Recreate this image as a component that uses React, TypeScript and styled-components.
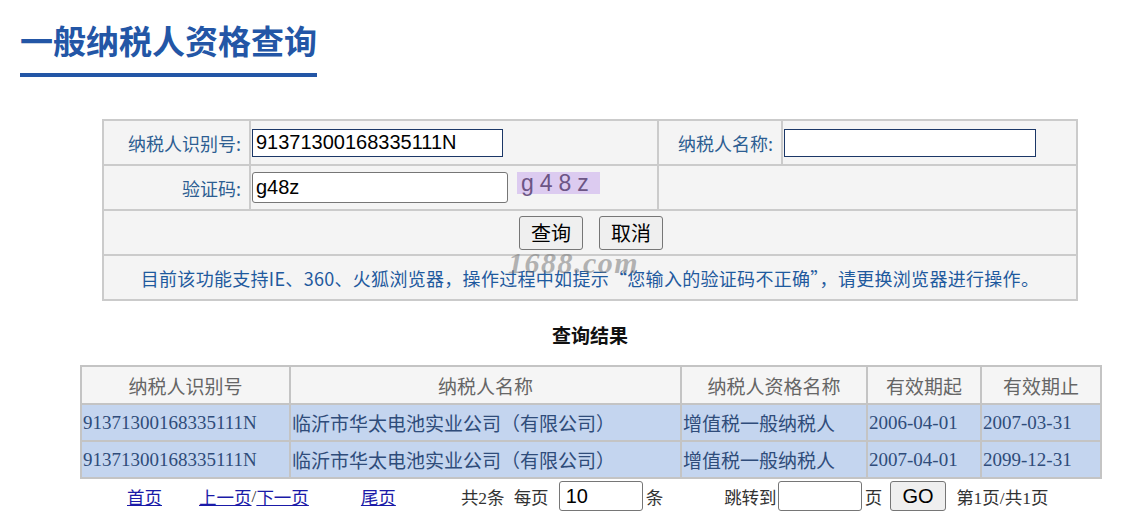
import React from 'react';
import styled, { createGlobalStyle } from 'styled-components';

const GlobalStyle = createGlobalStyle`
  html, body {
    margin: 0;
    padding: 0;
    background: #fff;
  }
  body {
    font-family: "Liberation Sans", "Noto Sans CJK SC", sans-serif;
  }
`;

const Page = styled.div`
  width: 1147px;
  padding-bottom: 10px;
`;

const Header = styled.div`
  padding: 16px 0 0 20px;
`;

const Title = styled.h1`
  display: inline-block;
  margin: 0;
  padding-bottom: 9px;
  font-family: "Noto Sans CJK SC", sans-serif;
  font-size: 33px;
  line-height: 48px;
  font-weight: 700;
  color: #2356a6;
  border-bottom: 4px solid #2356a6;
`;

const FormTable = styled.table`
  margin: 42px 0 0 102px;
  width: 974px;
  table-layout: fixed;
  border-collapse: collapse;
  border: 2px solid #cbcbcb;
`;

const Cell = styled.td<{ $align?: string }>`
  height: 43px;
  padding: 0;
  border: 2px solid #cbcbcb;
  background: #f4f4f4;
  text-align: ${(p) => p.$align || 'left'};
  vertical-align: middle;
`;

const Label = styled(Cell)`
  padding-right: 8px;
  text-align: right;
  font-family: "Noto Sans CJK SC", sans-serif;
  font-size: 18px;
  color: #2d5e92;
`;

const FieldRow = styled.div`
  display: flex;
  align-items: center;
  padding-left: 1px;
`;

const TextField = styled.input<{ $w: number; $rounded?: boolean }>`
  box-sizing: border-box;
  width: ${(p) => p.$w}px;
  height: ${(p) => (p.$rounded ? 31 : 28)}px;
  margin: 0;
  padding: 0 3px;
  border: 1px solid ${(p) => (p.$rounded ? '#767676' : '#1b3767')};
  border-radius: ${(p) => (p.$rounded ? 3 : 0)}px;
  background: #fff;
  font-family: "Liberation Sans", sans-serif;
  font-size: 20px;
  color: #000;
  outline: none;
`;

const Captcha = styled.span`
  display: inline-block;
  margin: -10px 0 0 9px;
  width: 83px;
  height: 22px;
  line-height: 22px;
  padding-left: 4px;
  box-sizing: border-box;
  background: #dccbf0;
  font-family: "Liberation Sans", sans-serif;
  font-size: 23px;
  letter-spacing: 6px;
  color: #6c5585;
`;

const Buttons = styled.div`
  display: flex;
  justify-content: center;
  gap: 16px;
  padding-left: 2px;
`;

const Button = styled.button<{ $w: number; $h: number }>`
  box-sizing: border-box;
  width: ${(p) => p.$w}px;
  height: ${(p) => p.$h}px;
  padding: 0;
  border: 1px solid #767676;
  border-radius: 3px;
  background: #efefef;
  font-family: "Liberation Sans", "Noto Sans CJK SC", sans-serif;
  font-size: 20px;
  color: #000;
`;

const Notice = styled.div`
  position: relative;
  font-family: "Noto Sans CJK SC", sans-serif;
  font-size: 18px;
  letter-spacing: 0.3px;
  color: #1f5a9e;
  text-align: center;
`;

const Watermark = styled.span`
  position: absolute;
  left: 404px;
  top: -19px;
  font-family: "Liberation Serif", serif;
  font-style: italic;
  font-weight: 700;
  font-size: 30px;
  letter-spacing: 1.5px;
  color: rgba(110, 110, 110, 0.5);
  pointer-events: none;
`;

const Results = styled.div`
  margin: 0 0 0 80px;
  width: 1020px;
`;

const ResultTitle = styled.div`
  margin: 23px 0 15px;
  text-align: center;
  font-family: "Liberation Serif", "Noto Sans CJK SC", serif;
  font-weight: 700;
  font-size: 19px;
  line-height: 26px;
  color: #111;
`;

const ResultTable = styled.table`
  width: 1020px;
  table-layout: fixed;
  border-collapse: collapse;
  border: 2px solid #c4c4c4;
`;

const Th = styled.th`
  height: 36px;
  padding: 0;
  border: 2px solid #c4c4c4;
  background: #f5f5f5;
  font-family: "Liberation Serif", "Noto Sans CJK SC", serif;
  font-weight: 400;
  font-size: 19px;
  color: #666;
  text-align: center;
`;

const Td = styled.td`
  height: 35px;
  padding: 0 0 0 1px;
  border: 2px solid #c4c4c4;
  background: #c4d5ef;
  font-family: "Liberation Serif", "Noto Sans CJK SC", serif;
  font-size: 19px;
  color: #2f4c7a;
  white-space: nowrap;
  overflow: hidden;
`;

const Pager = styled.div`
  display: flex;
  align-items: center;
  height: 30px;
  margin: 2px 0 0 127px;
  font-family: "Liberation Serif", "Noto Sans CJK SC", serif;
  font-size: 17.5px;
  color: #333;
`;

const PagerItem = styled.span<{ $ml?: number }>`
  margin-left: ${(p) => p.$ml || 0}px;
  white-space: nowrap;
`;

const PagerLink = styled.a<{ $ml?: number }>`
  margin-left: ${(p) => p.$ml || 0}px;
  color: #1a1aa8;
  text-decoration: underline;
  cursor: pointer;
  white-space: nowrap;
`;

const PagerInput = styled.input<{ $ml?: number }>`
  box-sizing: border-box;
  width: 84px;
  height: 30px;
  margin: 0 0 0 ${(p) => p.$ml || 0}px;
  padding: 0 6px;
  border: 1px solid #767676;
  border-radius: 3px;
  background: #fff;
  font-family: "Liberation Sans", sans-serif;
  font-size: 20px;
  color: #000;
  outline: none;
`;

const GoButton = styled(Button)`
  margin-left: 8px;
`;

const rows = [
  ['91371300168335111N', '临沂市华太电池实业公司（有限公司）', '增值税一般纳税人', '2006-04-01', '2007-03-31'],
  ['91371300168335111N', '临沂市华太电池实业公司（有限公司）', '增值税一般纳税人', '2007-04-01', '2099-12-31'],
];

const App: React.FC = () => {
  return (
    <Page>
      <GlobalStyle />
      <Header>
        <Title>一般纳税人资格查询</Title>
      </Header>

      <FormTable>
        <colgroup>
          <col style={{ width: 147 }} />
          <col style={{ width: 408 }} />
          <col style={{ width: 124 }} />
          <col style={{ width: 295 }} />
        </colgroup>
        <tbody>
          <tr>
            <Label>纳税人识别号:</Label>
            <Cell>
              <FieldRow>
                <TextField $w={251} defaultValue="91371300168335111N" />
              </FieldRow>
            </Cell>
            <Label>纳税人名称:</Label>
            <Cell>
              <FieldRow>
                <TextField $w={252} defaultValue="" />
              </FieldRow>
            </Cell>
          </tr>
          <tr>
            <Label>验证码:</Label>
            <Cell>
              <FieldRow>
                <TextField $w={256} $rounded defaultValue="g48z" />
                <Captcha>g48z</Captcha>
              </FieldRow>
            </Cell>
            <Cell colSpan={2} />
          </tr>
          <tr>
            <Cell colSpan={4}>
              <Buttons>
                <Button $w={64} $h={34}>查询</Button>
                <Button $w={64} $h={34}>取消</Button>
              </Buttons>
            </Cell>
          </tr>
          <tr>
            <Cell colSpan={4}>
              <Notice>
                目前该功能支持IE、360、火狐浏览器，操作过程中如提示“您输入的验证码不正确”，请更换浏览器进行操作。
                <Watermark>1688.com</Watermark>
              </Notice>
            </Cell>
          </tr>
        </tbody>
      </FormTable>

      <Results>
        <ResultTitle>查询结果</ResultTitle>
        <ResultTable>
          <colgroup>
            <col style={{ width: 209 }} />
            <col style={{ width: 391 }} />
            <col style={{ width: 186 }} />
            <col style={{ width: 114 }} />
            <col style={{ width: 120 }} />
          </colgroup>
          <thead>
            <tr>
              <Th>纳税人识别号</Th>
              <Th>纳税人名称</Th>
              <Th>纳税人资格名称</Th>
              <Th>有效期起</Th>
              <Th>有效期止</Th>
            </tr>
          </thead>
          <tbody>
            {rows.map((r, i) => (
              <tr key={i}>
                {r.map((c, j) => (
                  <Td key={j}>{c}</Td>
                ))}
              </tr>
            ))}
          </tbody>
        </ResultTable>
      </Results>

      <Pager>
        <PagerLink>首页</PagerLink>
        <PagerLink $ml={37}>上一页</PagerLink>
        <PagerItem>/</PagerItem>
        <PagerLink>下一页</PagerLink>
        <PagerLink $ml={52}>尾页</PagerLink>
        <PagerItem $ml={65}>共2条</PagerItem>
        <PagerItem $ml={9}>每页</PagerItem>
        <PagerInput $ml={10} defaultValue="10" />
        <PagerItem $ml={3}>条</PagerItem>
        <PagerItem $ml={61}>跳转到</PagerItem>
        <PagerInput $ml={1} defaultValue="" />
        <PagerItem $ml={3}>页</PagerItem>
        <GoButton $w={56} $h={30}>GO</GoButton>
        <PagerItem $ml={10}>第1页/共1页</PagerItem>
      </Pager>
    </Page>
  );
};

export default App;
